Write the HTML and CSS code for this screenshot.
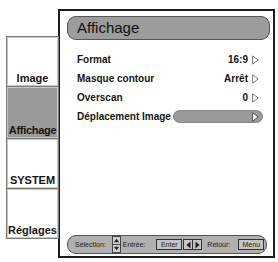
FILE: index.html
```html
<!DOCTYPE html>
<html>
<head>
<meta charset="utf-8">
<link rel="stylesheet" href="styles.css">
</head>
<body>
<div class="screen">
  <div class="tabs">
    <div class="tab">Image</div>
    <div class="tab active">Affichage</div>
    <div class="tab">SYSTEM</div>
    <div class="tab">Réglages</div>
  </div>
  <div class="panel">
    <div class="title">Affichage</div>
    <div class="rows">
      <div class="row"><span class="label">Format</span><span class="value">16:9</span><svg class="arrow" viewBox="0 0 7 10"><path d="M0.6 0.8 L6.2 5 L0.6 9.2 Z"/></svg></div>
      <div class="row"><span class="label">Masque contour</span><span class="value">Arrêt</span><svg class="arrow" viewBox="0 0 7 10"><path d="M0.6 0.8 L6.2 5 L0.6 9.2 Z"/></svg></div>
      <div class="row"><span class="label">Overscan</span><span class="value">0</span><svg class="arrow" viewBox="0 0 7 10"><path d="M0.6 0.8 L6.2 5 L0.6 9.2 Z"/></svg></div>
      <div class="row"><span class="label">Déplacement Image</span><span class="slider"><svg class="arrow light" viewBox="0 0 7 10"><path d="M0.6 0.8 L6.2 5 L0.6 9.2 Z"/></svg></span></div>
    </div>
    <div class="footer">
      <span class="ftext">Sélection:</span>
      <span class="updown">
        <span class="ud"><svg viewBox="0 0 8 5"><path d="M1 4.5 L4 0.5 L7 4.5 Z"/></svg></span>
        <span class="ud"><svg viewBox="0 0 8 5"><path d="M1 0.5 L4 4.5 L7 0.5 Z"/></svg></span>
      </span>
      <span class="ftext">Entrée:</span>
      <span class="key enter">Enter</span>
      <span class="lr">
        <span class="lrc"><svg viewBox="0 0 5 8"><path d="M4.5 0.5 L0.5 4 L4.5 7.5 Z"/></svg></span>
        <span class="lrc"><svg viewBox="0 0 5 8"><path d="M0.5 0.5 L4.5 4 L0.5 7.5 Z"/></svg></span>
      </span>
      <span class="ftext retour">Retour:</span>
      <span class="key menu">Menu</span>
    </div>
  </div>
</div>
</body>
</html>
```
FILE: styles.css
```css
html, body {
  margin: 0;
  padding: 0;
  background: #ffffff;
}
body {
  width: 278px;
  height: 262px;
  overflow: hidden;
  font-family: "Liberation Sans", Arial, sans-serif;
  color: #111;
}
.screen {
  display: flex;
  align-items: flex-start;
  padding: 9px 0 0 6px;
}
.tabs {
  position: relative;
  z-index: 1;
  margin-top: 27px;
  width: 53px;
  display: flex;
  flex-direction: column;
  background: #fff;
}
.tab {
  box-sizing: border-box;
  height: 51px;
  border: 1px solid #7a7a7a;
  margin-top: -1px;
  box-shadow: inset 0 0 0 1px #c8c8c8;
  display: flex;
  align-items: flex-end;
  justify-content: center;
  padding-bottom: 2px;
  font-weight: bold;
  font-size: 11px;
  line-height: 12px;
  color: #151515;
  white-space: nowrap;
}
.tab:first-child {
  margin-top: 0;
}
.tab.active {
  background: #9a9a9a;
  height: 53px;
  letter-spacing: -0.3px;
}
.panel {
  box-sizing: border-box;
  margin-left: -1px;
  width: 217px;
  height: 249px;
  border: 2px solid #1c1c1c;
  padding: 5px 3px 2px 7px;
  display: flex;
  flex-direction: column;
}
.title {
  box-sizing: border-box;
  height: 24px;
  border: 1.5px solid #555;
  border-radius: 9px;
  background: #9c9c9c;
  font-size: 15px;
  line-height: 21px;
  padding-left: 9px;
  color: #111;
}
.rows {
  margin-top: 10px;
  padding: 0 7px 0 10px;
  display: flex;
  flex-direction: column;
}
.row {
  height: 19px;
  display: flex;
  align-items: center;
  font-weight: bold;
  font-size: 10px;
  color: #151515;
}
.label {
  white-space: nowrap;
}
.value {
  margin-left: auto;
}
.arrow {
  width: 7px;
  height: 10px;
  margin-left: 4px;
  margin-right: 4px;
  flex: none;
}
.arrow path {
  fill: #fff;
  stroke: #777;
  stroke-width: 1;
}
.slider {
  flex: 1;
  margin-left: 2px;
  box-sizing: border-box;
  height: 13px;
  border-radius: 7px;
  background: #9a9a9a;
  border: 1px solid #888;
  display: flex;
  align-items: center;
  justify-content: flex-end;
}
.slider .arrow {
  margin-right: 3px;
}
.arrow.light path {
  fill: #f2f2f2;
  stroke: #555;
}
.footer {
  margin-top: auto;
  margin-right: 3px;
  box-sizing: border-box;
  height: 19px;
  border: 1px solid #555;
  border-radius: 9px;
  background: #b0b0b0;
  display: flex;
  align-items: center;
  padding-left: 7px;
  font-size: 7px;
  color: #222;
}
.ftext {
  white-space: nowrap;
}
.updown {
  display: flex;
  flex-direction: column;
  margin-left: 6px;
  margin-right: 2px;
}
.ud {
  box-sizing: border-box;
  width: 9px;
  height: 9px;
  border: 1px solid #444;
  background: #d0d0d0;
  display: flex;
  align-items: center;
  justify-content: center;
}
.ud + .ud {
  margin-top: -1px;
}
.ud svg {
  width: 7px;
  height: 5px;
}
.ud path, .lrc path {
  fill: #222;
}
.key {
  box-sizing: border-box;
  height: 11px;
  border: 1px solid #333;
  background: #c4c4c4;
  display: flex;
  align-items: center;
  justify-content: center;
  line-height: 9px;
}
.enter {
  width: 26px;
  margin-left: 11px;
}
.lr {
  display: flex;
  margin-left: 1px;
}
.lrc {
  box-sizing: border-box;
  width: 10px;
  height: 11px;
  border: 1px solid #333;
  background: #c4c4c4;
  display: flex;
  align-items: center;
  justify-content: center;
}
.lrc + .lrc {
  margin-left: -1px;
}
.lrc svg {
  width: 5px;
  height: 8px;
}
.retour {
  margin-left: 5px;
}
.menu {
  width: 26px;
  margin-left: 8px;
}
```
